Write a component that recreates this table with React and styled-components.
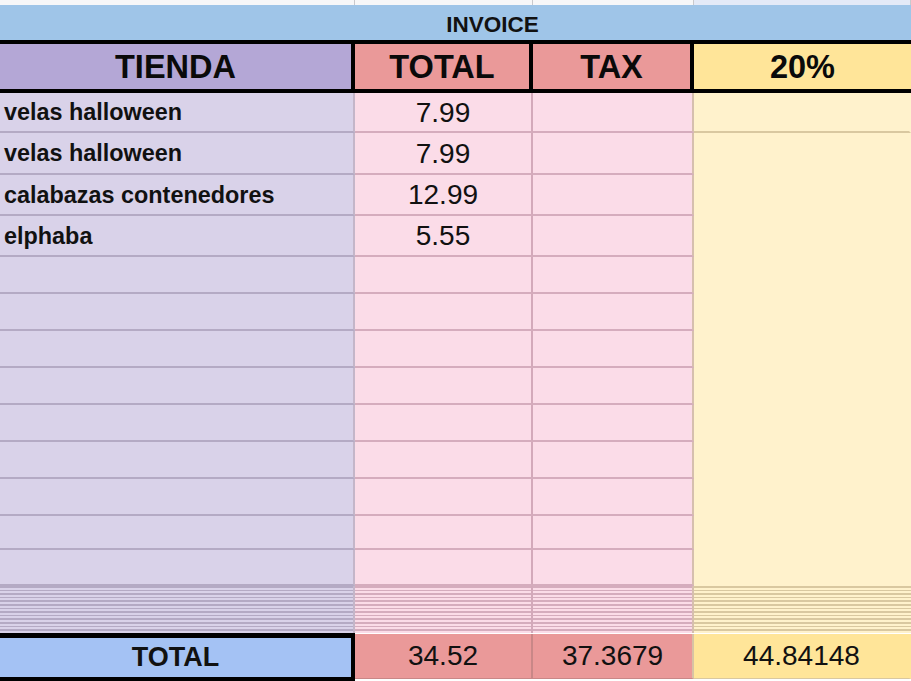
import React from 'react';
import styled, { createGlobalStyle } from 'styled-components';

const GlobalStyle = createGlobalStyle`
  * { box-sizing: border-box; }
  body {
    margin: 0;
    background: #fff;
    font-family: "Liberation Sans", Arial, sans-serif;
    color: #111;
    overflow: hidden;
  }
`;

const COLS = '355px 178px 161px 1fr';
const ROW_HEIGHTS = [40, 42, 41, 41, 37, 37, 37, 37, 37, 37, 37, 34, 36];

const colors = {
  store: { head: '#b4a7d6', body: '#d9d2e9', line: '#b4aac4', side: '#c4b6c9', foot: '#a4c2f4' },
  total: { head: '#ea9999', body: '#fbdce8', line: '#d5acbd', side: '#d3a9ba', foot: '#ea9999' },
  tax: { head: '#ea9999', body: '#fbdce8', line: '#d5acbd', side: '#d6bfae', foot: '#ea9999' },
  pct: { head: '#ffe599', body: '#fff2cc', line: '#d9c8a0', side: 'transparent', foot: '#ffe599' },
};

const items = [
  { name: 'velas halloween', total: '7.99' },
  { name: 'velas halloween', total: '7.99' },
  { name: 'calabazas contenedores', total: '12.99' },
  { name: 'elphaba', total: '5.55' },
];

const Sheet = styled.div`
  width: 911px;
  height: 681px;
  overflow: hidden;
  display: flex;
  flex-direction: column;
`;

const TopStrip = styled.div`
  display: grid;
  grid-template-columns: ${COLS};
  height: 5px;
`;

const StripCell = styled.div`
  background: ${p => (p.$selected ? '#e4eaf7' : '#f7f7f8')};
  border-right: 1px solid #c9c9cc;
`;

const InvoiceBand = styled.div`
  height: 35px;
  background: #9fc5e8;
  display: flex;
  align-items: center;
  justify-content: center;
  padding: 5px 0 0 74px;
  font-size: 22.5px;
  font-weight: 700;
`;

const HeaderRow = styled.div`
  display: grid;
  grid-template-columns: ${COLS};
  height: 53px;
  border-top: 4px solid #000;
  border-bottom: 4px solid #000;
`;

const HeadCell = styled.div`
  background: ${p => colors[p.$kind].head};
  border-right: ${p => (p.$kind === 'pct' ? 'none' : '4px solid #000')};
  display: flex;
  align-items: center;
  justify-content: center;
  padding-top: 2px;
  font-size: 32.5px;
  font-weight: 700;
  color: #0a0a0a;
`;

const Body = styled.div`
  display: grid;
  grid-template-columns: ${COLS};
  grid-template-rows: ${ROW_HEIGHTS.map(h => `${h}px`).join(' ')};
`;

const Cell = styled.div`
  grid-column: ${p => p.$col};
  grid-row: ${p => (p.$span ? `span ${p.$span}` : 'auto')};
  background: ${p => colors[p.$kind].body};
  border-right: 2px solid ${p => colors[p.$kind].side};
  border-bottom: ${p => (p.$open ? 'none' : `2px solid ${colors[p.$kind].line}`)};
  display: flex;
  align-items: center;
  justify-content: ${p => (p.$kind === 'store' ? 'flex-start' : 'center')};
  padding: 1px 4px 0;
  font-size: ${p => (p.$kind === 'store' ? '23.4px' : '28px')};
  font-weight: ${p => (p.$kind === 'store' ? 700 : 400)};
  white-space: nowrap;
`;

const StripeRow = styled.div`
  display: grid;
  grid-template-columns: ${COLS};
  height: 47px;
`;

const StripeCell = styled.div`
  border-right: 2px solid ${p => colors[p.$kind].side};
  background: repeating-linear-gradient(
    to bottom,
    ${p => colors[p.$kind].line} 0px,
    ${p => colors[p.$kind].line} 1.6px,
    ${p => colors[p.$kind].body} 1.6px,
    ${p => colors[p.$kind].body} 3.6px
  );
`;

const FootRow = styled.div`
  display: grid;
  grid-template-columns: ${COLS};
  height: 48px;
  align-items: start;
  background: #fff;
`;

const FootLabel = styled.div`
  height: 48px;
  background: ${colors.store.foot};
  border-top: 5px solid #000;
  border-bottom: 4px solid #000;
  border-right: 4px solid #000;
  display: flex;
  align-items: center;
  justify-content: center;
  font-size: 27px;
  font-weight: 700;
`;

const FootValue = styled.div`
  height: 45px;
  margin-top: 1px;
  background: ${p => colors[p.$kind].foot};
  border-right: 2px solid ${p => (p.$kind === 'tax' ? '#d8c3a4' : p.$kind === 'pct' ? 'transparent' : '#c98787')};
  border-bottom: 1px solid ${p => (p.$kind === 'pct' ? '#d9c8a0' : '#c98787')};
  display: flex;
  align-items: center;
  justify-content: center;
  font-size: 28px;
`;

const kinds = ['store', 'total', 'tax', 'pct'];

export default function App() {
  const rows = ROW_HEIGHTS.map((_, i) => items[i] || { name: '', total: '' });

  return (
    <Sheet>
      <GlobalStyle />
      <TopStrip>
        {kinds.map(k => (
          <StripCell key={k} $selected={k === 'pct'} />
        ))}
      </TopStrip>
      <InvoiceBand>INVOICE</InvoiceBand>
      <HeaderRow>
        <HeadCell $kind="store">TIENDA</HeadCell>
        <HeadCell $kind="total">TOTAL</HeadCell>
        <HeadCell $kind="tax">TAX</HeadCell>
        <HeadCell $kind="pct">20%</HeadCell>
      </HeaderRow>
      <Body>
        {rows.map((row, i) => (
          <React.Fragment key={i}>
            <Cell $kind="store" $col={1}>{row.name}</Cell>
            <Cell $kind="total" $col={2}>{row.total}</Cell>
            <Cell $kind="tax" $col={3} />
            {i === 0 && <Cell $kind="pct" $col={4} />}
            {i === 1 && <Cell $kind="pct" $col={4} $span={ROW_HEIGHTS.length - 1} $open />}
          </React.Fragment>
        ))}
      </Body>
      <StripeRow>
        {kinds.map(k => (
          <StripeCell key={k} $kind={k} />
        ))}
      </StripeRow>
      <FootRow>
        <FootLabel>TOTAL</FootLabel>
        <FootValue $kind="total">34.52</FootValue>
        <FootValue $kind="tax">37.3679</FootValue>
        <FootValue $kind="pct">44.84148</FootValue>
      </FootRow>
    </Sheet>
  );
}
